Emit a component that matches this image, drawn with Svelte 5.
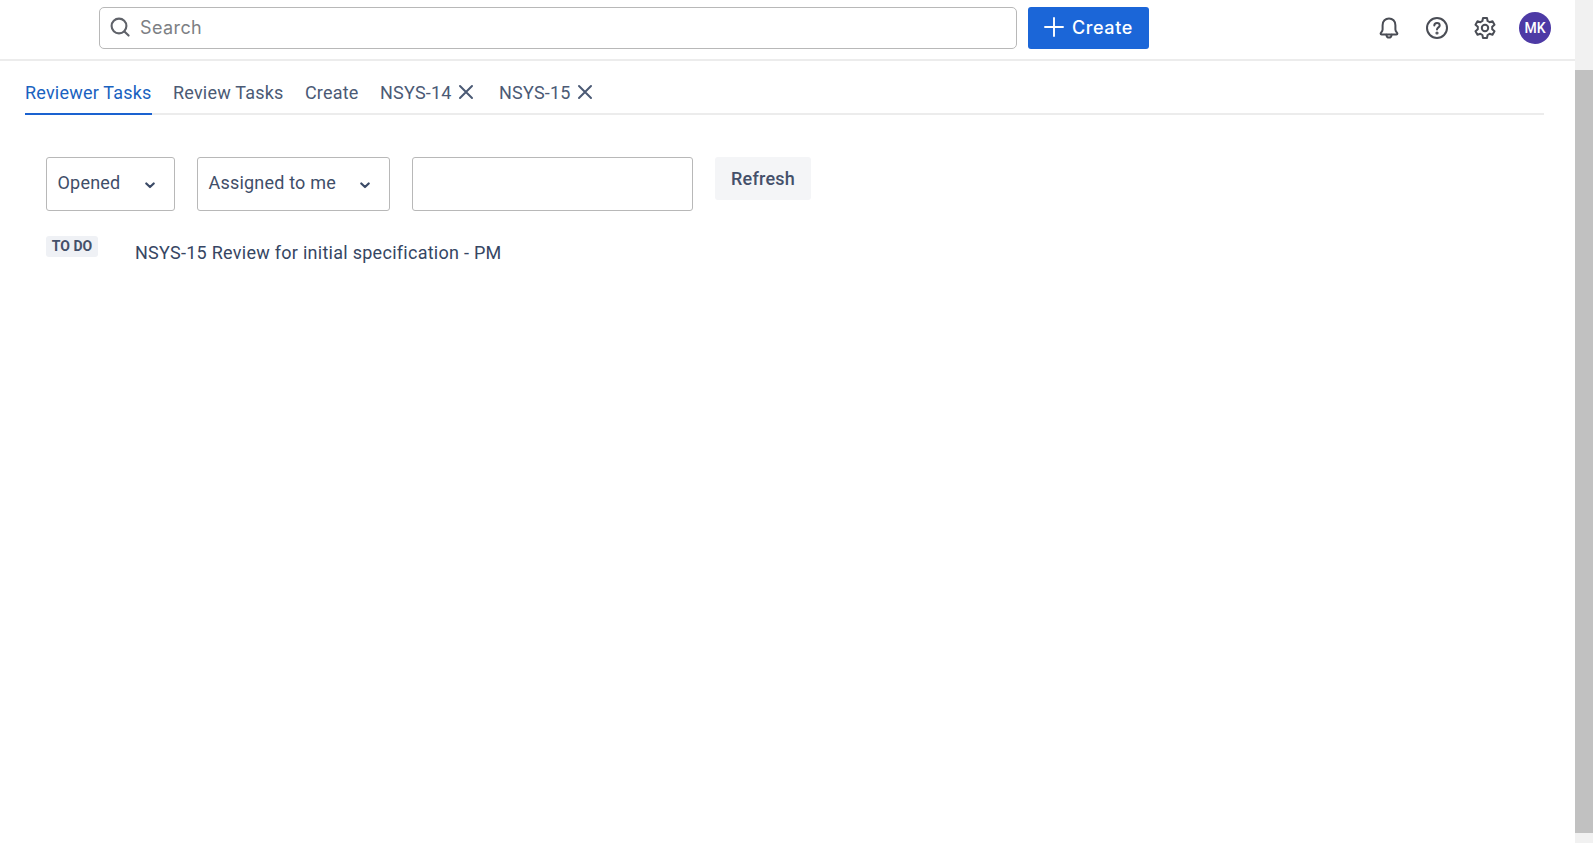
<script>
  let tabs = [
    { label: 'Reviewer Tasks', active: true },
    { label: 'Review Tasks' },
    { label: 'Create' },
    { label: 'NSYS-14', closable: true },
    { label: 'NSYS-15', closable: true }
  ];
</script>

<div class="page">
  <div class="main">
    <header class="topbar">
      <div class="search">
        <svg width="24" height="24" viewBox="0 0 24 24" fill="none" stroke="#5f6269" stroke-width="2.1" stroke-linecap="round">
          <circle cx="11" cy="11" r="7.4" />
          <path d="M16.4 16.4 L20.6 20.6" />
        </svg>
        <span>Search</span>
      </div>
      <button class="create">
        <svg width="24" height="24" viewBox="0 0 24 24" fill="none" stroke="#fff" stroke-width="1.9" stroke-linecap="round">
          <path d="M12 3 V21 M3 12 H21" />
        </svg>
        Create
      </button>
      <div class="actions">
        <svg class="icon" width="24" height="24" viewBox="0 0 24 24" fill="none" stroke="#4a4d55" stroke-width="2" stroke-linejoin="round" stroke-linecap="round">
          <path d="M3.6 17.5 C3.6 16.6 5.6 15.6 5.6 13.5 V9.2 C5.6 5.2 8.4 2.4 12 2.4 C15.6 2.4 18.4 5.2 18.4 9.2 V13.5 C18.4 15.6 20.4 16.6 20.4 17.5 C20.4 18.2 20 18.6 19.4 18.6 H4.6 C4 18.6 3.6 18.2 3.6 17.5 Z" />
          <path d="M9.4 18.8 C9.6 20.6 10.7 21.6 12 21.6 C13.3 21.6 14.4 20.6 14.6 18.8" />
        </svg>
        <svg class="icon" width="24" height="24" viewBox="0 0 24 24" fill="none" stroke="#4a4d55" stroke-width="2" stroke-linecap="round">
          <circle cx="12" cy="12" r="10" />
          <path d="M9.3 9.6 C9.3 8 10.6 7 12 7 C13.5 7 14.7 8 14.7 9.4 C14.7 11.4 12 11.4 12 13.6" />
          <circle cx="12" cy="17" r="0.6" fill="#4a4d55" />
        </svg>
        <svg class="icon" width="24" height="24" viewBox="0 0 24 24" fill="none" stroke="#4a4d55" stroke-width="2" stroke-linejoin="round">
          <circle cx="12" cy="12" r="3.2" />
          <path d="M10 2 H14 L14.6 5 L16.6 6.2 L19.5 5.2 L21.5 8.7 L19.2 10.7 V13.3 L21.5 15.3 L19.5 18.8 L16.6 17.8 L14.6 19 L14 22 H10 L9.4 19 L7.4 17.8 L4.5 18.8 L2.5 15.3 L4.8 13.3 V10.7 L2.5 8.7 L4.5 5.2 L7.4 6.2 L9.4 5 Z" />
        </svg>
        <div class="avatar">MK</div>
      </div>
    </header>

    <nav class="tabs">
      {#each tabs as tab}
        <div class="tab" class:active={tab.active}>
          <span>{tab.label}</span>
          {#if tab.closable}
            <svg class="close" width="16" height="16" viewBox="0 0 16 16" fill="none" stroke="#4b5a75" stroke-width="2" stroke-linecap="round">
              <path d="M2 2 L14 14 M14 2 L2 14" />
            </svg>
          {/if}
        </div>
      {/each}
    </nav>

    <section class="filters">
      <div class="select opened">
        <span>Opened</span>
        <svg class="chev" width="10" height="7" viewBox="0 0 10 7" fill="none" stroke="#3b4a66" stroke-width="2.2" stroke-linecap="round" stroke-linejoin="round"><path d="M1.3 1.5 L5 5 L8.7 1.5" /></svg>
      </div>
      <div class="select assigned">
        <span>Assigned to me</span>
        <svg class="chev" width="10" height="7" viewBox="0 0 10 7" fill="none" stroke="#3b4a66" stroke-width="2.2" stroke-linecap="round" stroke-linejoin="round"><path d="M1.3 1.5 L5 5 L8.7 1.5" /></svg>
      </div>
      <div class="textbox"></div>
      <button class="refresh">Refresh</button>
    </section>

    <div class="task">
      <span class="lozenge">TO DO</span>
      <span class="title">NSYS-15 Review for initial specification - PM</span>
    </div>
  </div>

  <div class="scrollbar">
    <div class="thumb"></div>
  </div>
</div>

<style>
  :global(body) {
    margin: 0;
    background: #fff;
    font-family: Roboto, "Liberation Sans", sans-serif;
  }

  .page {
    display: flex;
    height: 843px;
    overflow: hidden;
  }

  .main {
    flex: 1;
    min-width: 0;
  }

  .topbar {
    display: flex;
    align-items: flex-start;
    height: 52px;
    padding: 7px 24px 0 99px;
    border-bottom: 2px solid #ececec;
  }

  .search {
    display: flex;
    align-items: center;
    gap: 8px;
    box-sizing: border-box;
    width: 918px;
    height: 42px;
    padding: 0 0 2px 8px;
    border: 1.5px solid #b8b8b8;
    border-radius: 5px;
    color: #7d7f84;
    font-family: Inter, sans-serif;
    font-size: 18px;
    letter-spacing: 0.4px;
  }

  .create {
    display: flex;
    align-items: center;
    gap: 6px;
    box-sizing: border-box;
    width: 121px;
    height: 42px;
    margin-left: 11px;
    padding: 0 0 2px 14px;
    border: 0;
    border-radius: 3px;
    background: #1b66d8;
    color: #fff;
    font-family: Inter, sans-serif;
    font-size: 18px;
    font-weight: 500;
    letter-spacing: 0.6px;
  }

  .actions {
    display: flex;
    align-items: center;
    gap: 24px;
    margin-left: auto;
    height: 42px;
  }

  .avatar {
    display: flex;
    align-items: center;
    justify-content: center;
    width: 32px;
    height: 32px;
    margin-left: -1.6px;
    border-radius: 50%;
    background: #4d3aa5;
    color: #fff;
    font-size: 14px;
    font-weight: 500;
  }

  .tabs {
    display: flex;
    gap: 21.5px;
    height: 54px;
    box-sizing: border-box;
    margin: 0 31px 0 25px;
    border-bottom: 2px solid #ececec;
  }

  .tab {
    display: flex;
    align-items: center;
    gap: 6px;
    height: 54px;
    box-sizing: border-box;
    padding-top: 10px;
    border-bottom: 2px solid transparent;
    color: #4b5a75;
    font-size: 18px;
    letter-spacing: 0.2px;
  }

  .tab.active {
    color: #1a62bf;
    border-bottom-color: #1a62d0;
  }

  .close {
    margin-right: 4px;
  }

  .filters {
    display: flex;
    align-items: flex-start;
    gap: 22px;
    padding: 42px 0 0 46px;
  }

  .select {
    display: flex;
    align-items: center;
    box-sizing: border-box;
    height: 54px;
    padding: 0 19px 3px 10.5px;
    border: 1.5px solid #b8b8b8;
    border-radius: 3px;
    color: #3f4e69;
    font-size: 18px;
    letter-spacing: 0.2px;
  }

  .select span {
    flex: 1;
  }

  .chev {
    margin-top: 5px;
  }

  .opened { width: 129px; }
  .assigned { width: 193px; }

  .textbox {
    box-sizing: border-box;
    width: 281px;
    height: 54px;
    border: 1.5px solid #b8b8b8;
    border-radius: 3px;
  }

  .refresh {
    width: 96px;
    height: 43px;
    border: 0;
    border-radius: 3px;
    background: #f4f5f7;
    color: #44506a;
    font-family: inherit;
    font-size: 18px;
    font-weight: 500;
    letter-spacing: 0.25px;
  }

  .task {
    display: flex;
    align-items: flex-start;
    padding: 25px 0 0 46px;
  }

  .lozenge {
    box-sizing: border-box;
    width: 52px;
    height: 21px;
    line-height: 20px;
    border-radius: 3px;
    background: #eff1f5;
    color: #44506a;
    font-size: 14px;
    font-weight: 700;
    text-align: center;
  }

  .title {
    margin: 5px 0 0 37px;
    color: #364663;
    font-size: 18px;
    line-height: 24px;
    letter-spacing: 0.27px;
  }

  .scrollbar {
    width: 18px;
    height: 100%;
    padding-top: 70px;
    padding-bottom: 10px;
    box-sizing: border-box;
    background: #f1f1f1;
  }

  .thumb {
    height: 100%;
    background: #c1c1c1;
  }
</style>
